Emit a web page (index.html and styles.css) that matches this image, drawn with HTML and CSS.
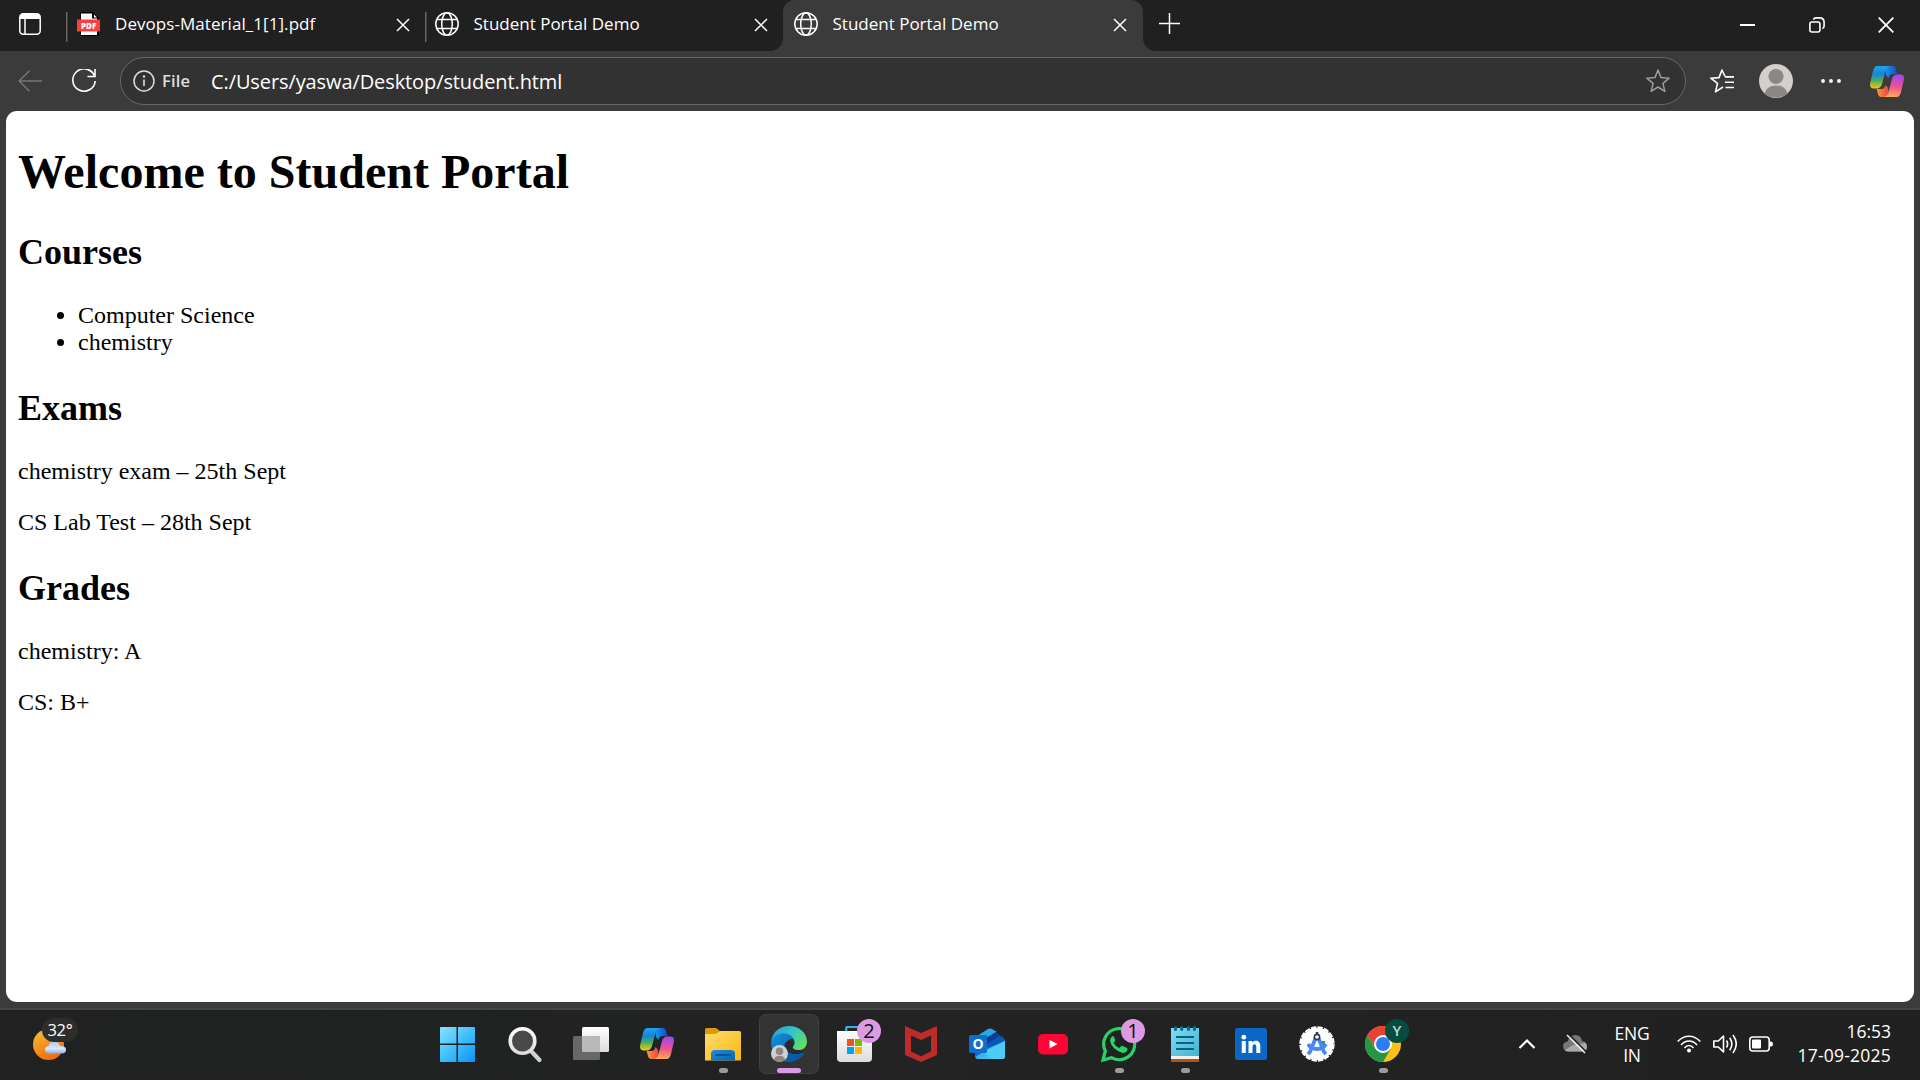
FILE: index.html
```html
<!DOCTYPE html>
<html lang="en">
<head>
<meta charset="utf-8">
<title>Student Portal Demo</title>
<link rel="stylesheet" href="styles.css">
</head>
<body>
<svg class="defs" aria-hidden="true">
  <defs>
    <linearGradient id="cpBlue" x1="0" y1="0" x2="0" y2="1"><stop offset="0" stop-color="#1fa4ee"/><stop offset=".35" stop-color="#1385dd"/><stop offset=".65" stop-color="#4cae5c"/><stop offset="1" stop-color="#f6cb09"/></linearGradient>
    <linearGradient id="cpPink" x1=".3" y1="0" x2=".2" y2="1"><stop offset="0" stop-color="#a048f0"/><stop offset=".5" stop-color="#ee5090"/><stop offset="1" stop-color="#ffae55"/></linearGradient>
    <linearGradient id="cpTop" x1="0" y1="0" x2="1" y2="0"><stop offset="0" stop-color="#189be8"/><stop offset="1" stop-color="#1647ce"/></linearGradient>
    <linearGradient id="cpBot" x1="0" y1="0" x2="1" y2="0"><stop offset="0" stop-color="#fb9a3b"/><stop offset="1" stop-color="#e9433f"/></linearGradient>
    <linearGradient id="win" x1="0" y1="0" x2="1" y2="1"><stop offset="0" stop-color="#8be0ff"/><stop offset=".5" stop-color="#3fc0fb"/><stop offset="1" stop-color="#0a93f6"/></linearGradient>
    <linearGradient id="folder" x1="0" y1="0" x2="1" y2="1"><stop offset="0" stop-color="#ffdc70"/><stop offset="1" stop-color="#fbb810"/></linearGradient>
    <linearGradient id="folderBlue" x1="0" y1="0" x2="1" y2="1"><stop offset="0" stop-color="#1b8fdc"/><stop offset="1" stop-color="#0864b0"/></linearGradient>
    <linearGradient id="edgeTop" x1="0" y1=".2" x2="1" y2=".8"><stop offset="0" stop-color="#279fd6"/><stop offset=".45" stop-color="#36c5c7"/><stop offset="1" stop-color="#68df58"/></linearGradient>
    <linearGradient id="edgeBody" x1="0" y1="0" x2="1" y2="1"><stop offset="0" stop-color="#1498e4"/><stop offset="1" stop-color="#0b4c96"/></linearGradient>
    <linearGradient id="white" x1="0" y1="0" x2="0" y2="1"><stop offset="0" stop-color="#fff"/><stop offset="1" stop-color="#dcdcdc"/></linearGradient>
    <linearGradient id="note" x1="0" y1="0" x2="1" y2="1"><stop offset="0" stop-color="#80dcf4"/><stop offset="1" stop-color="#42b2d2"/></linearGradient>
    <linearGradient id="moon" x1="0" y1="0" x2=".5" y2="1"><stop offset="0" stop-color="#f3c43a"/><stop offset="1" stop-color="#f56c0a"/></linearGradient>
    <linearGradient id="cloud" x1="0" y1="0" x2="0" y2="1"><stop offset="0" stop-color="#a9c8f8"/><stop offset=".6" stop-color="#dbe8fb"/><stop offset="1" stop-color="#86aeef"/></linearGradient>
    <linearGradient id="mail" x1="0" y1="0" x2="1" y2="1"><stop offset="0" stop-color="#198ad5"/><stop offset="1" stop-color="#54dcfb"/></linearGradient>
    <symbol id="copilot" viewBox="0 0 34 31">
      <path d="M15 0h7.500c2.500 0 3.200 1.500 3.800 4l1 4H23c-3 0-3.800 1.500-4.600 4L16 9z" fill="url(#cpTop)"/>
      <path d="M19 31h-7.500c-2.500 0-3.200-1.500-3.800-4l-1-4H11c3 0 3.800-1.500 4.600-4l2.400 3z" fill="url(#cpBot)"/>
      <path d="M7.500 0H20c-2.500.6-3.500 2-4.300 4.500l-3.600 13c-1 3.500-2.500 5-6 5H3.500C.5 22.500-.5 20.300.2 17L3 5C3.800 2 5 0 7.500 0z" fill="url(#cpBlue)"/>
      <path d="M26.500 31H14c2.500-.6 3.500-2 4.300-4.500l3.600-13c1-3.500 2.500-5 6-5h2.600c3 0 4 2.200 3.300 5.500L31 26c-.8 3-2 5-4.500 5z" fill="url(#cpPink)"/>
    </symbol>
    <symbol id="globe" viewBox="0 0 24 24">
      <g fill="none" stroke="#fff" stroke-width="1.500"><circle cx="12" cy="12" r="11.200"/><ellipse cx="12" cy="12" rx="5.300" ry="11.200"/><path d="M2 7.500h20M2 16.500h20"/></g>
    </symbol>
    <symbol id="close" viewBox="0 0 14 14"><path d="M1 1l12 12M13 1L1 13" stroke="#fff" stroke-width="1.500" fill="none"/></symbol>
    <symbol id="person" viewBox="0 0 34 34">
      <circle cx="17" cy="17" r="17" fill="#d2cfcc"/><circle cx="17" cy="12.500" r="7.500" fill="#8b8784"/>
      <path d="M5.500 29.500C7 24.500 11 21.500 17 21.500s10 3 11.500 8A17 17 0 0 1 17 33.500a17 17 0 0 1-11.500-4z" fill="#8b8784"/>
    </symbol>
  </defs>
</svg>

<header class="tabstrip">
  <div class="tab-actions">
    <svg width="22" height="22" viewBox="0 0 22 22"><rect x=".8" y=".8" width="20.400" height="20.400" rx="3.500" fill="none" stroke="#fff" stroke-width="1.500"/><path d="M1 6V4q0-3 3-3h14q3 0 3 3v2z" fill="#fff"/><path d="M6 6v15" stroke="#fff" stroke-width="1.500"/></svg>
  </div>
  <div class="tab divided">
    <svg class="favicon" viewBox="0 0 24 24"><path d="M3 0h13l6 6v18H3z" fill="#000"/><path d="M4 1.500h11v5h5V23H4z" fill="#fff"/><path d="M17 2.500l3 3h-3z" fill="#fff"/><rect x="0" y="7.500" width="23" height="12" fill="#f8413f"/><text x="11.700" y="16.500" class="pdf-label">PDF</text></svg>
    <span class="title file">Devops-Material_1[1].pdf</span>
    <svg class="close"><use href="#close"/></svg>
  </div>
  <div class="tab divided">
    <svg class="favicon"><use href="#globe"/></svg>
    <span class="title">Student Portal Demo</span>
    <svg class="close"><use href="#close"/></svg>
  </div>
  <div class="tab active">
    <svg class="favicon"><use href="#globe"/></svg>
    <span class="title">Student Portal Demo</span>
    <svg class="close"><use href="#close"/></svg>
  </div>
  <svg class="new-tab" width="21" height="21" viewBox="0 0 21 21"><path d="M10.500 0v21M0 10.500h21" stroke="#fff" stroke-width="1.500"/></svg>
  <div class="window-controls">
    <svg width="16" height="16" viewBox="0 0 16 16"><path d="M0 8h15" stroke="#fff" stroke-width="2"/></svg>
    <svg width="16" height="16" viewBox="0 0 16 16"><g fill="none" stroke="#fff" stroke-width="1.600"><rect x=".9" y="5" width="10" height="10" rx="2"/><path d="M4.500 2.800Q5 .9 7 .9h3.500q4.600 0 4.600 4.600V9q0 2-1.800 2.600"/></g></svg>
    <svg width="16" height="16" viewBox="0 0 16 16"><path d="M.7.700l14.600 14.600M15.300.700L.7 15.300" stroke="#fff" stroke-width="1.800"/></svg>
  </div>
</header>

<nav class="toolbar">
  <svg class="back" width="24" height="22" viewBox="0 0 24 22"><path d="M24 11H1M11.500.700L1 11l10.500 10.300" fill="none" stroke="#777" stroke-width="1.500"/></svg>
  <svg class="reload" width="24" height="24" viewBox="0 0 24 24"><path d="M22.500 7A11.200 11.200 0 1 0 23.200 12M23 0v7.500h-7.500" fill="none" stroke="#fff" stroke-width="1.600"/></svg>
  <div class="address">
    <svg width="22" height="22" viewBox="0 0 22 22"><circle cx="11" cy="11" r="10" fill="none" stroke="#dedede" stroke-width="1.500"/><path d="M11 9.500V16" stroke="#dedede" stroke-width="1.600"/><circle cx="11" cy="6.500" r="1.200" fill="#dedede"/></svg>
    <span class="scheme">File</span>
    <span class="url">C:/Users/yaswa/Desktop/student.html</span>
    <svg class="star" width="24" height="24" viewBox="0 0 24 24"><path d="M12 1l3 7.600 8.200.600-6.300 5.200 2 8L12 18l-6.900 4.400 2-8L.8 9.200 9 8.600z" fill="none" stroke="#9c9c9c" stroke-width="1.500" stroke-linejoin="round"/></svg>
  </div>
  <svg class="favorites" width="24" height="24" viewBox="0 0 24 24"><path d="M13 18l-7.500 4.800 2-8.400L.8 9.200 9 8.600 12 1l3 6.500M15 7.900h9M15 13.200h9M15.500 18.500H24" fill="none" stroke="#fff" stroke-width="1.600" stroke-linejoin="round"/></svg>
  <svg class="avatar" width="34" height="34"><use href="#person"/></svg>
  <svg class="more" width="20" height="6" viewBox="0 0 20 6"><g fill="#fff"><circle cx="2" cy="3" r="1.900"/><circle cx="10" cy="3" r="1.900"/><circle cx="18" cy="3" r="1.900"/></g></svg>
  <svg width="34" height="31"><use href="#copilot"/></svg>
</nav>

<main class="page">
  <h1>Welcome to Student Portal</h1>
  <h2>Courses</h2>
  <ul><li>Computer Science</li><li>chemistry</li></ul>
  <h2>Exams</h2>
  <p>chemistry exam – 25th Sept</p>
  <p>CS Lab Test – 28th Sept</p>
  <h2>Grades</h2>
  <p>chemistry: A</p>
  <p>CS: B+</p>
</main>

<footer class="taskbar">
  <div class="weather">
    <svg width="36" height="34" viewBox="0 0 36 34"><ellipse cx="15.500" cy="17.500" rx="15.500" ry="15.500" fill="url(#moon)"/><path d="M16 26.500q-4 0-4-3.700 0-3.300 3.500-3.800 1-5 6-4.500 4 0 5.500 4.500 6-.3 6 3.700 0 3.800-4 3.800z" fill="url(#cloud)"/></svg>
    <span class="temperature">32°</span>
  </div>
  <div class="apps">
    <svg class="start" viewBox="0 0 60 60"><path d="M14 13h15.500v16.500H13V14q0-1 1-1zM31 13h16q1 0 1 1v15.500H31zM13 31h16.500v17H14q-1 0-1-1zM31 31h17v16q0 1-1 1H31z" fill="url(#win)"/></svg>
    <svg viewBox="0 0 60 60"><path d="M37 38l7.500 8" stroke="#cfd3d8" stroke-width="4.200" stroke-linecap="round"/><circle cx="27.500" cy="27" r="12.300" fill="#494949" stroke="url(#white)" stroke-width="3.600"/></svg>
    <svg viewBox="0 0 60 60"><rect x="21" y="13" width="27" height="25" rx="1.500" fill="url(#white)"/><rect x="12" y="22" width="27" height="24" rx="1.500" fill="#686868"/><path d="M21 22h16.500q1.500 0 1.500 1.500V38H22.500Q21 38 21 36.500z" fill="#b9b9b9"/></svg>
    <svg viewBox="0 0 60 60"><use href="#copilot" x="13" y="14" width="34" height="31"/></svg>
    <svg viewBox="0 0 60 60"><path d="M12 15.500q0-1.500 1.500-1.500H23l4 3h6v8H12z" fill="#dc9b06"/><path d="M12 20h10.500l5-3H46.500q1.500 0 1.500 1.500V46.500H12z" fill="url(#folder)"/><path d="M18 46.500V40q0-4 4-4h16q4 0 4 4v6.500z" fill="url(#folderBlue)"/><path d="M23 41h14" stroke="#075292" stroke-width="2" stroke-linecap="round"/><rect x="26" y="54" width="9" height="5" rx="2.500" fill="#9c9c9c"/></svg>
    <svg viewBox="0 0 60 60"><rect x=".5" y=".5" width="59" height="59" rx="6" fill="#333334" stroke="#404041"/>
      <path d="M12.200 28c.5-8 7-13 15-12 7 .8 10 5 10 11-1.500-2.500-4.500-3-7-1.500-3.500 2-4 7-1 10.500 4.500 5.500 12 3.500 15.500 1.500C42 43.500 36.500 48 30 48c-10.500 0-18.300-9-17.800-20z" fill="url(#edgeBody)"/>
      <path d="M12.500 26C14 17.500 21 12 30 12c10.500 0 18 7.500 18 15.500C48 33.500 44 36 39.500 36c-5 0-6.500-2-5.500-3.500 1.200-1.500 1.800-2.700 1.500-5C34.800 22 28.500 18.500 22.500 19.500 18 20.300 14.500 22.500 12.500 26z" fill="url(#edgeTop)"/>
      <path d="M34.500 30.500c-.5-3.500-5-5-8-1.500-2.500 3.500 0 8.500 5 10.300 5 1.700 10 .5 13.500-1.300-2-1.500-4-2-6-2-4 0-6-1.500-5.500-3z" fill="#26292d"/>
      <path d="M26 31.500c-.3 7 8 11.500 19.500 7-4 8-12 10-17 8-5-3-6.500-10-2.500-15z" fill="#0b5aa5"/>
      <use href="#person" x="12" y="31" width="17" height="17"/><rect x="18" y="54" width="24" height="5" rx="2.500" fill="#db9be2"/></svg>
    <svg viewBox="0 0 60 60"><path d="M21.200 20v-6q0-1 1-1H34" fill="none" stroke="#2db4f5" stroke-width="2.200"/><path d="M12 17h35v27q0 4-4 4H16q-4 0-4-4z" fill="url(#white)"/><path d="M22 25h7v7h-7z" fill="#f25022"/><path d="M30 25h7v7h-7z" fill="#7fba00"/><path d="M22 33h7v7h-7z" fill="#00a4ef"/><path d="M30 33h7v7h-7z" fill="#ffb900"/><circle cx="44" cy="17" r="12" fill="#db9be2"/><text x="44" y="24" class="badge">2</text></svg>
    <svg viewBox="0 0 60 60"><path d="M14 12l16 7 16-7v29l-16 7-16-7zM20 21.500v16l10 4.700 10-4.700v-16L30 26z" fill="#bd2b2b" fill-rule="evenodd"/></svg>
    <svg viewBox="0 0 60 60"><path d="M18 27l13-10q2-2 4.500 0L48 26v16q0 3-3 3H21q-3 0-3-3z" fill="#1167c5"/><path d="M20 22l11-7q2-1 4 0l5 3-18 12z" fill="#29a8e8"/><path d="M22 28l17-10 5 3.500L24 34z" fill="#0b3f94"/><path d="M26 33l19-11 3 3.500L31 37z" fill="#0757bc"/><path d="M48 27v15q0 3-3 3H21q-2 0-3-2l14-9z" fill="url(#mail)"/><path d="M48 27v15q0 3-3 3h-9L26 38z" fill="#4bcdf4"/><rect x="12" y="21" width="18" height="18" rx="1.500" fill="#0f6fcd"/><text x="21" y="35" class="outlook">O</text></svg>
    <svg viewBox="0 0 60 60"><rect x="15" y="20" width="30" height="20.500" rx="5" fill="#ff0436"/><path d="M26.500 26v8.500L34.500 30z" fill="#fff"/></svg>
    <svg viewBox="0 0 60 60"><path d="M14 46l2.300-9a15.500 15.500 0 1 1 6.200 6.600z" fill="none" stroke="#25d366" stroke-width="3.200"/><path d="M23.500 22q-2.500 1.500-2.500 5 1.500 8 12.500 12 4 0 5-3.500.2-1.200-1-1.800l-4-1.800q-1-.3-1.700.6l-1.300 1.700q-4-1.700-6-5.200l1.300-1.800q.6-.8.200-1.600l-1.300-3q-.3-.7-1.200-.6z" fill="#25d366"/><circle cx="44" cy="17" r="12" fill="#db9be2"/><text x="44" y="24" class="badge">1</text><rect x="26" y="54" width="9" height="5" rx="2.500" fill="#9c9c9c"/></svg>
    <svg viewBox="0 0 60 60"><path d="M16 43h28v4q0 1-1 1H17q-1 0-1-1z" fill="#b65312"/><path d="M16 40h28v5H16z" fill="#f1f1f1"/><path d="M16 14h28v28H16z" fill="url(#note)"/><path d="M21 23h18M21 29h18M21 35h18" stroke="#08637f" stroke-width="2"/><g fill="#126b86"><rect x="19" y="12" width="3" height="5" rx="1.500"/><rect x="25.200" y="12" width="3" height="5" rx="1.500"/><rect x="32" y="12" width="3" height="5" rx="1.500"/><rect x="38" y="12" width="3" height="5" rx="1.500"/></g><rect x="26" y="54" width="9" height="5" rx="2.500" fill="#9c9c9c"/></svg>
    <svg viewBox="0 0 60 60"><rect x="14" y="14" width="32" height="32" rx="2.500" fill="#0b67c3"/><circle cx="22.800" cy="23.200" r="2.400" fill="#fff"/><path d="M20.800 27h4v12h-4zM27.500 27h3.800v1.700c2.200-3.200 8-2.600 8 3.300v7h-4v-6.300c0-3.300-3.800-3.300-3.800 0V39h-4z" fill="#fff"/></svg>
    <svg viewBox="0 0 60 60"><circle cx="30" cy="30" r="16.200" fill="#fff"/><circle cx="30" cy="30" r="16.300" fill="none" stroke="#fff" stroke-width="2.800" stroke-dasharray="5.200 1.200"/><path d="M33 27h5v6h-5z" fill="#23a455"/><path d="M29 23l-6 15-2 2M31 23l6 15 2 2M21 30q3 5 9 5t9-5" fill="none" stroke="#478af5" stroke-width="3.800"/><path d="M30 18v3" stroke="#303b49" stroke-width="2.500"/><circle cx="30" cy="23" r="2.600" fill="#fff" stroke="#303b49" stroke-width="1.600"/></svg>
    <svg viewBox="0 0 60 60"><circle cx="30" cy="30" r="18" fill="#fbc116"/><path d="M30 21h15.600A18 18 0 0 0 14.400 21L22 34z" fill="#e94235"/><path d="M14.400 21A18 18 0 0 0 30 48l8-13.500-8 4.500-8-4.500z" fill="#249747"/><circle cx="30" cy="30" r="9" fill="#fff"/><circle cx="30" cy="30" r="7" fill="#2e7cf2"/><circle cx="44" cy="17" r="12" fill="#064d40"/><text x="44" y="22" class="profile">Y</text><rect x="26" y="54" width="9" height="5" rx="2.500" fill="#9c9c9c"/></svg>
  </div>
  <div class="tray">
    <svg class="chevron" width="18" height="12" viewBox="0 0 18 12"><path d="M1.500 10L9 2.500l7.500 7.500" fill="none" stroke="#fff" stroke-width="2.200"/></svg>
    <svg class="onedrive" width="24" height="20" viewBox="0 0 24 20"><path d="M5 17.500q-5-.5-5-5.500Q0 8 4.500 7.500 7 1 12.500 1 18 1 19 7q5 .5 5 5.500 0 4.500-5 5z" fill="#777"/><path d="M2 16l8-5 12-2q2 1 2 4 0 4-5 4.500H5q-2 0-3-1.500z" fill="#aaa"/><path d="M5.500 0l18 18" stroke="#222" stroke-width="1.500"/><path d="M4 1l18 18" stroke="#f3f3f3" stroke-width="1.500"/></svg>
    <div class="language"><span>ENG</span><span>IN</span></div>
    <div class="status">
      <svg width="24" height="20" viewBox="0 0 24 20"><g fill="none" stroke="#fff" stroke-width="1.600"><path d="M.7 7.500Q5.500 2.200 12 2.200t11.300 5.300M4 11Q7.300 7 12 7t8 4M7.500 14Q9.500 11.500 12 11.500t4.500 2.500"/></g><circle cx="12" cy="16.500" r="2" fill="#fff"/></svg>
      <svg width="24" height="20" viewBox="0 0 24 20"><g fill="none" stroke="#fff" stroke-width="1.600" stroke-linejoin="round"><path d="M.8 7h4.500L10.500 2v16l-5.200-5H.8z"/><path d="M13.500 6.500q2.200 3.500 0 7M16.700 3.700q4.300 6.300 0 12.600M20 1q6.500 9 0 18"/></g></svg>
      <svg width="24" height="20" viewBox="0 0 24 20"><rect x=".8" y="3" width="19.400" height="14" rx="3" fill="none" stroke="#fff" stroke-width="1.600"/><rect x="3" y="5.500" width="9" height="9" rx="1" fill="#fff"/><path d="M20.500 7.500h1.500q2 0 2 2.500t-2 2.500h-1.500z" fill="#fff"/></svg>
    </div>
    <div class="clock"><span>16:53</span><span class="date">17-09-2025</span></div>
  </div>
</footer>
</body>
</html>
```

FILE: styles.css
```css
* { box-sizing: border-box; }
html, body { height: 100%; }
body {
  margin: 0;
  display: flex;
  flex-direction: column;
  overflow: hidden;
  background: #3b3b3b;
  color: #fff;
  font-family: "Open Sans", "Noto Sans", sans-serif;
}
svg { display: block; flex: none; }
.defs { position: absolute; width: 0; height: 0; }

/* Tab strip */
.tabstrip { height: 51px; flex: none; display: flex; background: #202020; }
.tab-actions { width: 66px; height: 48px; padding-left: 19px; display: flex; align-items: center; }
.tab { position: relative; width: 358.500px; height: 51px; padding: 0 15px 3px 10.500px; display: flex; align-items: center; }
.tab.divided { background: linear-gradient(#666, #666) 0 12px / 1.500px 30px no-repeat; }
.tab.active { width: 360px; padding: 0 16.500px 3px 11px; background: #3b3b3b; border-radius: 12px 12px 0 0; }
.tab.active::before, .tab.active::after { content: ""; position: absolute; bottom: 0; width: 12px; height: 12px; }
.tab.active::before { left: -12px; background: radial-gradient(circle at 0 0, #202020 11.500px, #3b3b3b 12px); }
.tab.active::after { right: -12px; background: radial-gradient(circle at 100% 0, #202020 11.500px, #3b3b3b 12px); }
.favicon { width: 24px; height: 24px; }
.title { margin-left: 14.500px; flex: 1; font-size: 17px; line-height: 24px; letter-spacing: 0; white-space: nowrap; }
.title.file { letter-spacing: 0.060px; }
.close { width: 14px; height: 14px; margin-top: 2px; }
.pdf-label { font: 800 8px "Open Sans", sans-serif; fill: #fff; text-anchor: middle; }
.new-tab { margin: 13px 0 0 15.500px; }
.window-controls { margin-left: auto; padding: 17px 26px 0 0; display: flex; gap: 53px; }

/* Toolbar */
.toolbar { height: 60px; flex: none; display: flex; align-items: center; padding: 0 16px 0 18px; background: #3b3b3b; }
.back { margin-right: 30px; }
.reload { margin-right: 24px; }
.address { flex: 1; height: 48px; display: flex; align-items: center; padding: 0 15px 0 12px; border: 1.500px solid #676767; border-radius: 24px; background: #323232; }
.scheme { width: 50px; margin: -2px 0 0 7px; color: #dedede; font-size: 16.500px; font-weight: 600; letter-spacing: 0.200px; }
.url { flex: 1; margin-left: -1px; font-size: 20px; letter-spacing: -0.100px; }
.favorites { margin: 0 25px 0 24px; }
.more { margin: 0 29px 0 28px; }

/* Web page */
.page {
  flex: 1;
  margin: 0 6px 6px;
  padding: 0 12px;
  overflow: hidden;
  border-radius: 11px;
  background: #fff;
  color: #000;
  font: 24px/27px "Liberation Serif", "Times New Roman", serif;
}
.page h1 { margin: 32.500px 0; font-size: 48px; line-height: 55px; letter-spacing: 0.020px; }
.page h2 { margin: 32px 0 30px; font-size: 36px; line-height: 40px; }
.page h1 + h2 { margin-top: 33.500px; }
.page p { margin: 24px 0; }
.page ul { margin: 24px 0; padding-left: 60px; }

/* Taskbar */
.taskbar { height: 72px; flex: none; display: flex; border-top: 2px solid #454545; background: linear-gradient(90deg, #212121, #202221 24%, #242224 45%, #222 70%, #202020); }
.weather { position: relative; width: 427px; padding: 17px 0 0 33px; }
.temperature { position: absolute; left: 42px; top: 8px; width: 36px; height: 24px; border-radius: 12px; background: #2d2d2d; font-size: 16.500px; line-height: 23px; letter-spacing: -0.300px; text-align: center; }
.apps { display: flex; gap: 6px; padding-top: 4px; }
.apps svg { width: 60px; height: 60px; overflow: visible; }
.apps .start { margin-right: 2px; }
.badge { font: 20px "Open Sans", sans-serif; fill: #111; text-anchor: middle; }
.outlook { font: 700 14px "Open Sans", sans-serif; fill: #fff; text-anchor: middle; }
.profile { font: 600 15px "Open Sans", sans-serif; fill: #c3d6d1; text-anchor: middle; }
.tray { margin-left: auto; padding-right: 29px; display: flex; align-items: center; height: 68px; font-size: 17.500px; line-height: 22px; }
.chevron { margin-right: 27px; }
.onedrive { margin-right: 27px; }
.language { width: 36px; margin-right: 27px; display: flex; flex-direction: column; align-items: center; letter-spacing: -0.200px; }
.status { display: flex; gap: 12px; }
.clock { width: 118px; padding-bottom: 2px; display: flex; flex-direction: column; align-items: flex-end; line-height: 24px; letter-spacing: 0; }
.date { letter-spacing: 0.220px; }
```
